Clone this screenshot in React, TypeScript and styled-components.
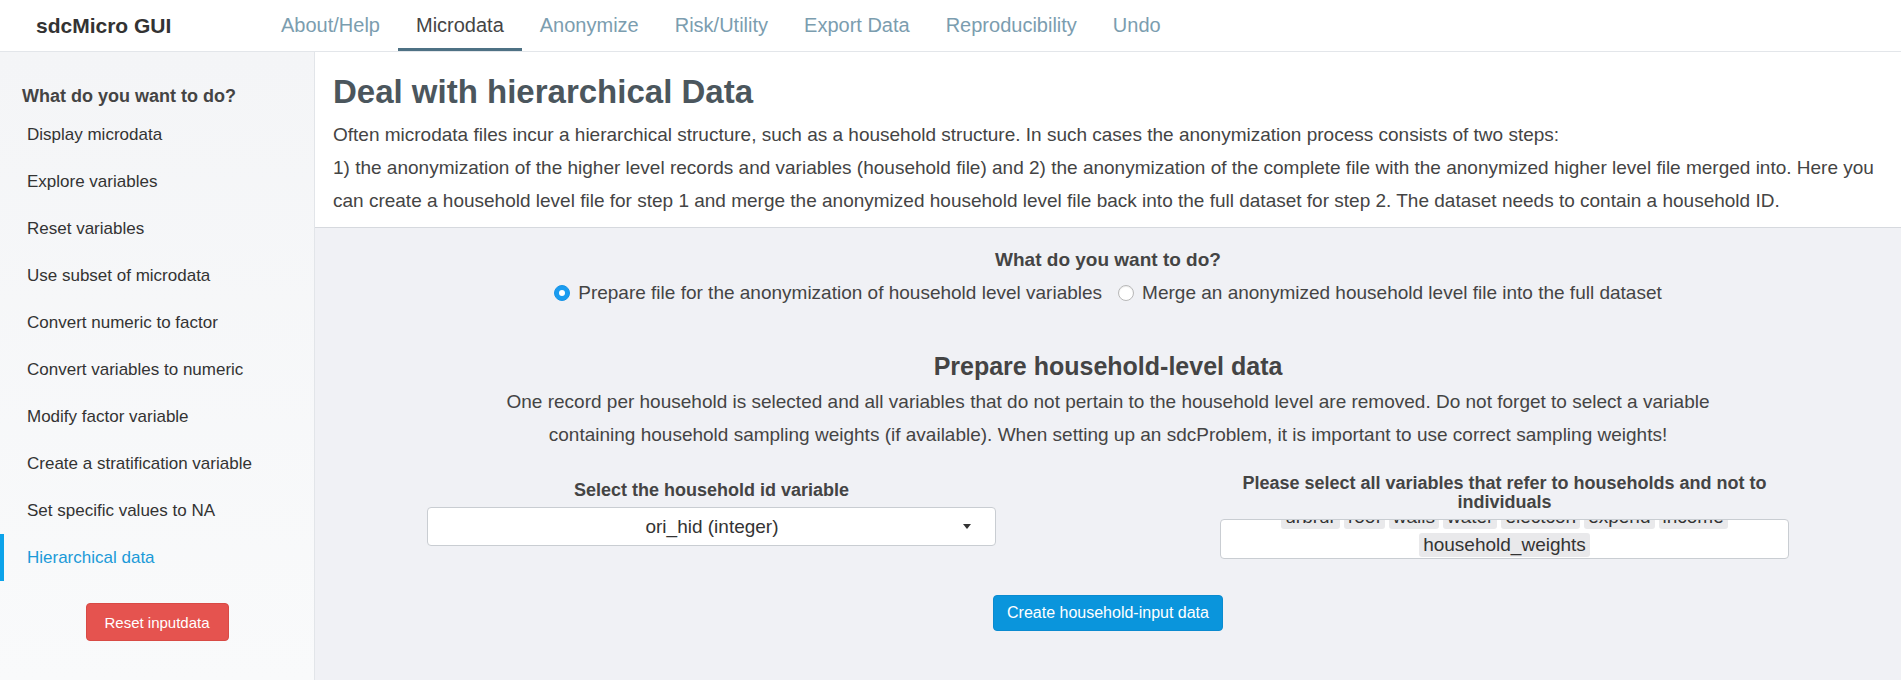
import React, { useState } from 'react';
import styled, { createGlobalStyle } from 'styled-components';

const GlobalStyle = createGlobalStyle`
  * { box-sizing: border-box; }
  html, body { margin: 0; padding: 0; background: #fff; }
  body {
    font-family: "Liberation Sans", Arial, Helvetica, sans-serif;
    color: #333;
  }
  #root { height: 680px; overflow: hidden; }
`;

const Page = styled.div`
  display: flex;
  flex-direction: column;
  height: 680px;
`;

const TopBar = styled.header`
  display: flex;
  height: 52px;
  background: #fff;
  border-bottom: 1px solid #e3e6ea;
`;

const Brand = styled.div`
  width: 263px;
  padding-left: 36px;
  display: flex;
  align-items: center;
  font-size: 21px;
  font-weight: bold;
  color: #333;
`;

const Nav = styled.nav`
  display: flex;
  height: 100%;
`;

const NavItem = styled.div<{ $active?: boolean }>`
  position: relative;
  display: flex;
  align-items: center;
  padding: 0 18px;
  font-size: 20px;
  color: ${p => (p.$active ? '#454545' : '#7b9daf')};
  cursor: pointer;

  &::after {
    content: '';
    position: absolute;
    left: 0;
    right: 0;
    bottom: 0;
    height: 3px;
    background: ${p => (p.$active ? '#4e7184' : 'transparent')};
  }
`;

const Body = styled.div`
  display: flex;
  flex: 1;
  min-height: 0;
`;

const Sidebar = styled.aside`
  width: 315px;
  flex-shrink: 0;
  display: flex;
  flex-direction: column;
  padding-top: 33px;
  background: linear-gradient(180deg, #f4f5f7 0%, #f9fafb 100%);
  border-right: 1px solid #e2e5e9;
`;

const SideTitle = styled.div`
  margin: 0 0 4px 22px;
  font-size: 18px;
  line-height: 22px;
  font-weight: bold;
  color: #444;
`;

const SideItem = styled.div<{ $active?: boolean }>`
  height: 47px;
  display: flex;
  align-items: center;
  padding-left: 27px;
  font-size: 17px;
  color: ${p => (p.$active ? '#1b9ad8' : '#333')};
  box-shadow: ${p => (p.$active ? 'inset 4px 0 0 #0ca3ea' : 'none')};
  cursor: pointer;
`;

const ResetButton = styled.button`
  align-self: center;
  margin-top: 22px;
  width: 143px;
  height: 38px;
  background: #e5534f;
  border: 1px solid #d84a45;
  border-radius: 4px;
  color: #fff;
  font-family: inherit;
  font-size: 15px;
  cursor: pointer;
`;

const Main = styled.main`
  flex: 1;
  min-width: 0;
  display: flex;
  flex-direction: column;
`;

const IntroPanel = styled.section`
  background: #fff;
  padding: 20px 18px 10px;
  border-bottom: 1px solid #d6d9de;
`;

const Title = styled.h2`
  margin: 0 0 6px;
  font-size: 33px;
  line-height: 40px;
  font-weight: bold;
  color: #4b565d;
`;

const IntroText = styled.p`
  margin: 0;
  font-size: 19px;
  line-height: 33px;
  color: #444;
  white-space: nowrap;
`;

const Workspace = styled.section`
  flex: 1;
  display: flex;
  flex-direction: column;
  align-items: center;
  padding-top: 20px;
  background: #f0f1f5;
`;

const Question = styled.div`
  font-size: 19px;
  line-height: 24px;
  font-weight: bold;
  color: #444;
`;

const RadioRow = styled.div`
  margin-top: 9px;
  display: flex;
  gap: 16px;
  font-size: 19px;
  line-height: 24px;
  color: #444;
`;

const RadioOption = styled.label`
  display: flex;
  align-items: center;
  gap: 8px;
  cursor: pointer;
`;

const RadioDot = styled.span<{ $checked?: boolean }>`
  width: 16px;
  height: 16px;
  border-radius: 50%;
  display: flex;
  align-items: center;
  justify-content: center;
  background: ${p => (p.$checked ? '#1a9cf0' : '#fff')};
  border: 1px solid ${p => (p.$checked ? '#1894e6' : '#b8b8b8')};
  box-shadow: ${p => (p.$checked ? 'none' : 'inset 0 1px 1px rgba(0,0,0,0.08)')};

  &::after {
    content: '';
    width: 6px;
    height: 6px;
    border-radius: 50%;
    background: ${p => (p.$checked ? '#fff' : 'transparent')};
  }
`;

const SectionTitle = styled.h3`
  margin: 46px 0 0;
  font-size: 25px;
  line-height: 30px;
  font-weight: bold;
  color: #444;
`;

const SectionText = styled.p`
  margin: 4px 0 0;
  font-size: 19px;
  line-height: 33px;
  text-align: center;
  white-space: nowrap;
  color: #444;
`;

const Columns = styled.div`
  align-self: stretch;
  display: grid;
  grid-template-columns: 1fr 1fr;
  margin-top: 23px;
`;

const Field = styled.div<{ $offset?: number }>`
  display: flex;
  flex-direction: column;
  align-items: center;
  padding-top: ${p => p.$offset ?? 0}px;
`;

const FieldLabel = styled.div`
  width: 569px;
  margin-bottom: 7px;
  text-align: center;
  font-size: 18px;
  line-height: 19px;
  font-weight: bold;
  color: #444;
`;

const Select = styled.div`
  width: 569px;
  height: 39px;
  display: flex;
  align-items: center;
  padding: 0 24px 0 33px;
  background: #fff;
  border: 1px solid #c9cdd2;
  border-radius: 4px;
  font-size: 19px;
  color: #333;
  cursor: pointer;
`;

const SelectValue = styled.span`
  flex: 1;
  text-align: center;
`;

const Caret = styled.span`
  width: 0;
  height: 0;
  border-left: 4.5px solid transparent;
  border-right: 4.5px solid transparent;
  border-top: 5px solid #333;
`;

const TagBox = styled.div`
  width: 569px;
  height: 40px;
  display: flex;
  flex-wrap: wrap;
  justify-content: center;
  align-content: flex-end;
  gap: 4px;
  padding: 0 8px 1px;
  overflow: hidden;
  background: #fff;
  border: 1px solid #c9cdd2;
  border-radius: 4px;
`;

const Tag = styled.span`
  height: 24px;
  line-height: 24px;
  padding: 0 4px;
  background: #e9e9eb;
  border-radius: 3px;
  font-size: 19px;
  color: #333;
`;

const PrimaryButton = styled.button`
  margin-top: 36px;
  height: 36px;
  padding: 0 13px;
  background: #0a95dc;
  border: 1px solid #0a8bd0;
  border-radius: 4px;
  color: #fff;
  font-family: inherit;
  font-size: 16px;
  cursor: pointer;
`;

const navItems = ['About/Help', 'Microdata', 'Anonymize', 'Risk/Utility', 'Export Data', 'Reproducibility', 'Undo'];

const sideItems = [
  'Display microdata',
  'Explore variables',
  'Reset variables',
  'Use subset of microdata',
  'Convert numeric to factor',
  'Convert variables to numeric',
  'Modify factor variable',
  'Create a stratification variable',
  'Set specific values to NA',
  'Hierarchical data',
];

const radioOptions = [
  'Prepare file for the anonymization of household level variables',
  'Merge an anonymized household level file into the full dataset',
];

const householdVars = ['urbrur', 'roof', 'walls', 'water', 'electcon', 'expend', 'income', 'household_weights'];

const App: React.FC = () => {
  const [choice, setChoice] = useState(0);

  return (
    <Page>
      <GlobalStyle />
      <TopBar>
        <Brand>sdcMicro GUI</Brand>
        <Nav>
          {navItems.map(item => (
            <NavItem key={item} $active={item === 'Microdata'}>
              {item}
            </NavItem>
          ))}
        </Nav>
      </TopBar>
      <Body>
        <Sidebar>
          <SideTitle>What do you want to do?</SideTitle>
          {sideItems.map(item => (
            <SideItem key={item} $active={item === 'Hierarchical data'}>
              {item}
            </SideItem>
          ))}
          <ResetButton>Reset inputdata</ResetButton>
        </Sidebar>
        <Main>
          <IntroPanel>
            <Title>Deal with hierarchical Data</Title>
            <IntroText>
              Often microdata files incur a hierarchical structure, such as a household structure. In such cases the anonymization process consists of two steps:
            </IntroText>
            <IntroText>
              1) the anonymization of the higher level records and variables (household file) and 2) the anonymization of the complete file with the anonymized higher level file merged into. Here you
              <br />
              can create a household level file for step 1 and merge the anonymized household level file back into the full dataset for step 2. The dataset needs to contain a household ID.
            </IntroText>
          </IntroPanel>
          <Workspace>
            <Question>What do you want to do?</Question>
            <RadioRow>
              {radioOptions.map((opt, i) => (
                <RadioOption key={opt} onClick={() => setChoice(i)}>
                  <RadioDot $checked={choice === i} />
                  {opt}
                </RadioOption>
              ))}
            </RadioRow>
            <SectionTitle>Prepare household-level data</SectionTitle>
            <SectionText>
              One record per household is selected and all variables that do not pertain to the household level are removed. Do not forget to select a variable
              <br />
              containing household sampling weights (if available). When setting up an sdcProblem, it is important to use correct sampling weights!
            </SectionText>
            <Columns>
              <Field $offset={7}>
                <FieldLabel>Select the household id variable</FieldLabel>
                <Select>
                  <SelectValue>ori_hid (integer)</SelectValue>
                  <Caret />
                </Select>
              </Field>
              <Field>
                <FieldLabel>Please select all variables that refer to households and not to individuals</FieldLabel>
                <TagBox>
                  {householdVars.map(v => (
                    <Tag key={v}>{v}</Tag>
                  ))}
                </TagBox>
              </Field>
            </Columns>
            <PrimaryButton>Create household-input data</PrimaryButton>
          </Workspace>
        </Main>
      </Body>
    </Page>
  );
};

export default App;
